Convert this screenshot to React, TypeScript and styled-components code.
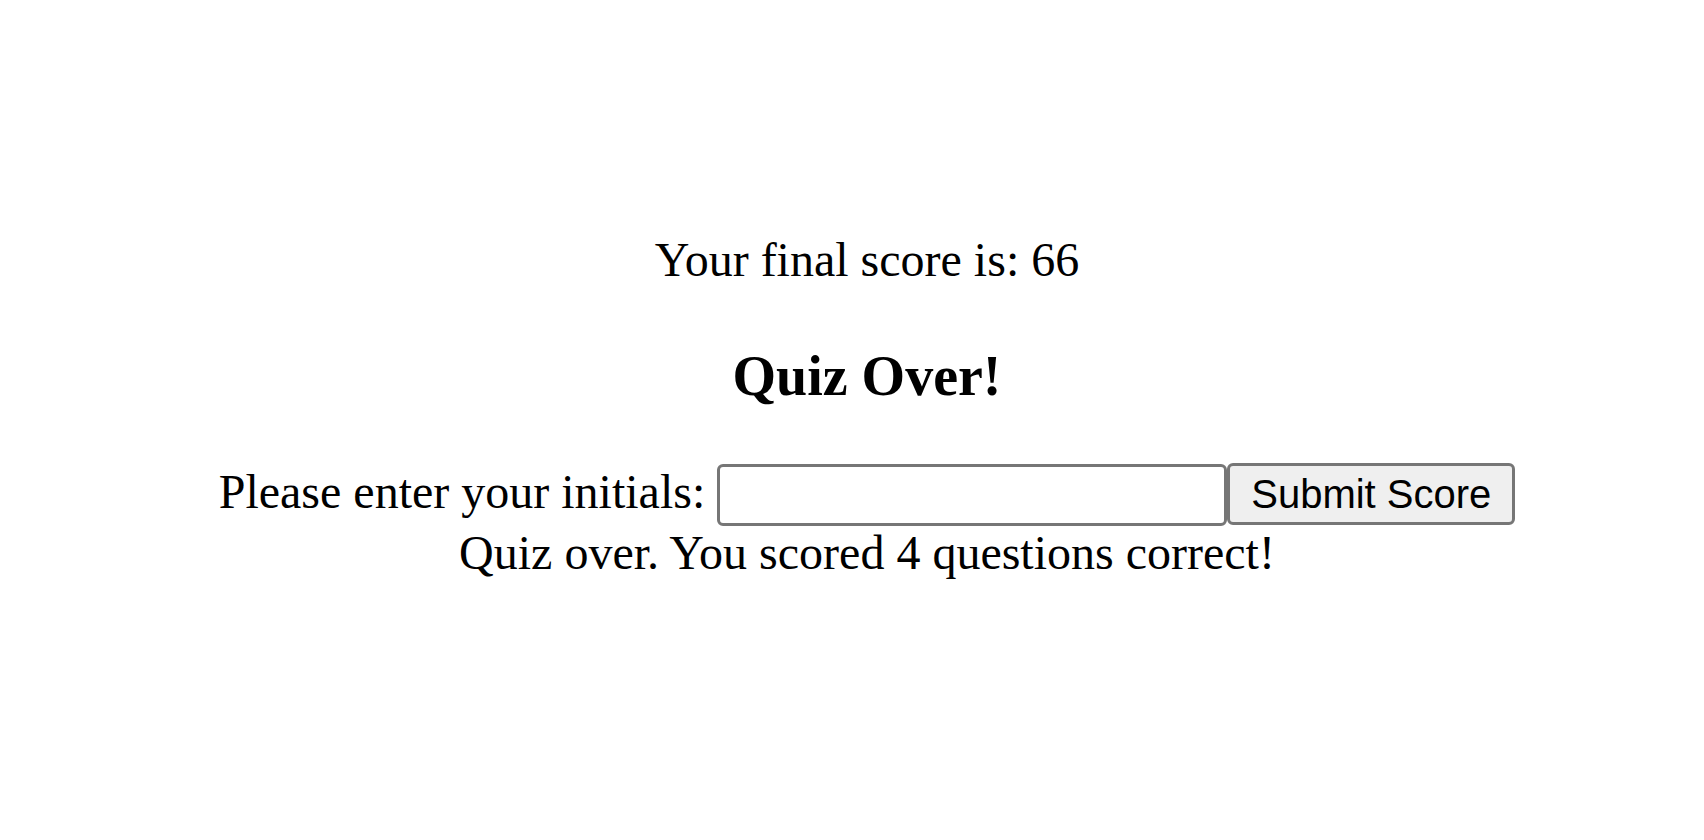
import React from "react";
import styled, { createGlobalStyle } from "styled-components";

const GlobalStyle = createGlobalStyle`
  html, body {
    margin: 0;
    padding: 0;
    background: #ffffff;
  }
  body {
    font-family: "Liberation Serif", "Times New Roman", serif;
    color: #000000;
  }
`;

const Page = styled.main`
  display: flex;
  flex-direction: column;
  align-items: center;
  text-align: center;
  padding: 232px 0 0 30px;
  min-height: 840px;
  box-sizing: border-box;
`;

const ScoreLine = styled.p`
  margin: 0;
  font-size: 48px;
  line-height: 55px;
`;

const Title = styled.h3`
  margin: 57px 0 0;
  font-size: 56px;
  line-height: 64px;
  font-weight: 700;
`;

const Form = styled.form`
  display: flex;
  align-items: baseline;
  margin-top: 55px;
`;

const Label = styled.label`
  font-size: 48px;
  line-height: 55px;
  margin-right: 12px;
`;

const Input = styled.input`
  box-sizing: border-box;
  width: 510px;
  height: 62px;
  border: 3px solid #767676;
  border-radius: 6px;
  background: #ffffff;
  padding: 3px 6px;
  font-family: "Liberation Sans", Arial, sans-serif;
  font-size: 40px;
  margin: 0;
  outline: none;
`;

const Button = styled.button`
  box-sizing: border-box;
  width: 288px;
  height: 62px;
  border: 3px solid #767676;
  border-radius: 6px;
  background: #efefef;
  color: #000000;
  padding: 0 18px;
  font-family: "Liberation Sans", Arial, sans-serif;
  font-size: 40px;
  line-height: 46px;
  margin: 0;
  cursor: pointer;
`;

const Result = styled.p`
  margin: -1px 0 0;
  font-size: 48px;
  line-height: 55px;
`;

export default function App() {
  return (
    <>
      <GlobalStyle />
      <Page>
        <ScoreLine>Your final score is: 66</ScoreLine>
        <Title>Quiz Over!</Title>
        <Form onSubmit={(e) => e.preventDefault()}>
          <Label htmlFor="initials">Please enter your initials:</Label>
          <Input id="initials" type="text" />
          <Button type="submit">Submit Score</Button>
        </Form>
        <Result>Quiz over. You scored 4 questions correct!</Result>
      </Page>
    </>
  );
}
